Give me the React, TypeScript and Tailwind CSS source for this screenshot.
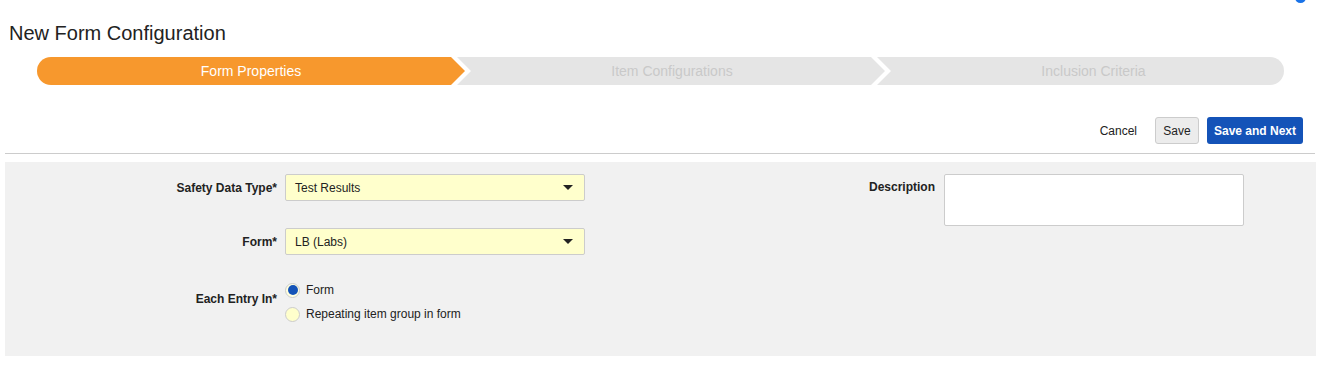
import React from 'react';

const steps = [
    { label: 'Form Properties', active: true },
    { label: 'Item Configurations', active: false },
    { label: 'Inclusion Criteria', active: false },
];

function Caret() {
    return (
        <svg width="10" height="5" viewBox="0 0 10 5" className="shrink-0">
            <path d="M0 0 L10 0 L5 5 Z" fill="#222" />
        </svg>
    );
}

function SelectBox({ value }: { value: string }) {
    return (
        <div className="flex items-center justify-between w-[300px] h-[27px] pl-[9px] pr-[11px] bg-[#ffffcc] border border-[#cccccc] rounded-[2px] text-[12px] text-[#222]">
            <span>{value}</span>
            <Caret />
        </div>
    );
}

function Radio({ checked, label }: { checked?: boolean; label: string }) {
    return (
        <div className="flex items-center gap-[6px] h-[20px]">
            {checked ? (
                <span className="flex items-center justify-center w-[15px] h-[15px] rounded-full border border-[#cccccc] bg-[#ffffe0]">
                    <span className="w-[10px] h-[10px] rounded-full bg-[#1453b8]"></span>
                </span>
            ) : (
                <span className="w-[15px] h-[15px] rounded-full border border-[#cccccc] bg-[#ffffcc]"></span>
            )}
            <span className="text-[12px] text-[#222]">{label}</span>
        </div>
    );
}

export default function App() {
    return (
        <div className="relative w-[1320px] h-[383px] bg-white overflow-hidden font-['Liberation_Sans',Arial,sans-serif]">
            {/* partly hidden icon in the corner */}
            <div className="absolute top-[-8px] left-[1295px] w-[11px] h-[11px] rounded-full bg-[#1a73e8]"></div>

            <div className="pl-[9px] pt-[21px] text-[20px] leading-6 text-[#222]">New Form Configuration</div>

            {/* stepper */}
            <div className="flex mt-[12px] ml-[37px] h-[28px] text-[14px]">
                <div className="flex items-center justify-center w-[428px] h-full rounded-l-full bg-[#f7982d] text-white [clip-path:polygon(0_0,calc(100%-14px)_0,100%_50%,calc(100%-14px)_100%,0_100%)]">
                    {steps[0].label}
                </div>
                <div className="flex items-center justify-center w-[428px] h-full -ml-[8px] pl-[2px] bg-[#e5e5e5] text-[#c9c9c9] [clip-path:polygon(0_0,calc(100%-14px)_0,100%_50%,calc(100%-14px)_100%,0_100%,14px_50%)]">
                    {steps[1].label}
                </div>
                <div className="flex items-center justify-center w-[407px] h-full -ml-[8px] pl-[26px] rounded-r-full bg-[#e5e5e5] text-[#c9c9c9] [clip-path:polygon(0_0,100%_0,100%_100%,0_100%,14px_50%)]">
                    {steps[2].label}
                </div>
            </div>

            {/* actions */}
            <div className="flex items-center justify-end gap-[8px] mt-[32px] pr-[17px] text-[12px]">
                <button className="h-[27px] px-[9px] mr-[1px] text-[#222]">Cancel</button>
                <button className="h-[27px] w-[44px] bg-[#ececec] border border-[#cccccc] rounded-[3px] text-[#222]">Save</button>
                <button className="h-[27px] w-[96px] bg-[#1453b8] rounded-[3px] text-white font-bold">Save and Next</button>
            </div>

            <div className="mt-[9px] mx-[5px] border-t border-[#cccccc]"></div>

            {/* form panel */}
            <div className="flex mt-[8px] ml-[5px] w-[1311px] h-[194px] pt-[12px] bg-[#f1f1f1] text-[12px]">
                <div className="flex flex-col w-[580px]">
                    <div className="flex items-center gap-[8px]">
                        <div className="w-[272px] text-right font-bold text-[#222]">Safety Data Type*</div>
                        <SelectBox value="Test Results" />
                    </div>
                    <div className="flex items-center gap-[8px] mt-[27px]">
                        <div className="w-[272px] text-right font-bold text-[#222]">Form*</div>
                        <SelectBox value="LB (Labs)" />
                    </div>
                    <div className="flex items-start gap-[8px] mt-[25px]">
                        <div className="w-[272px] pt-[10px] text-right font-bold text-[#222]">Each Entry In*</div>
                        <div className="flex flex-col gap-[4px]">
                            <Radio checked label="Form" />
                            <Radio label="Repeating item group in form" />
                        </div>
                    </div>
                </div>
                <div className="flex items-start gap-[9px]">
                    <div className="w-[350px] pt-[4px] text-right font-bold text-[#222]">Description</div>
                    <div className="w-[300px] h-[52px] bg-white border border-[#cccccc] rounded-[2px]"></div>
                </div>
            </div>
        </div>
    );
}
